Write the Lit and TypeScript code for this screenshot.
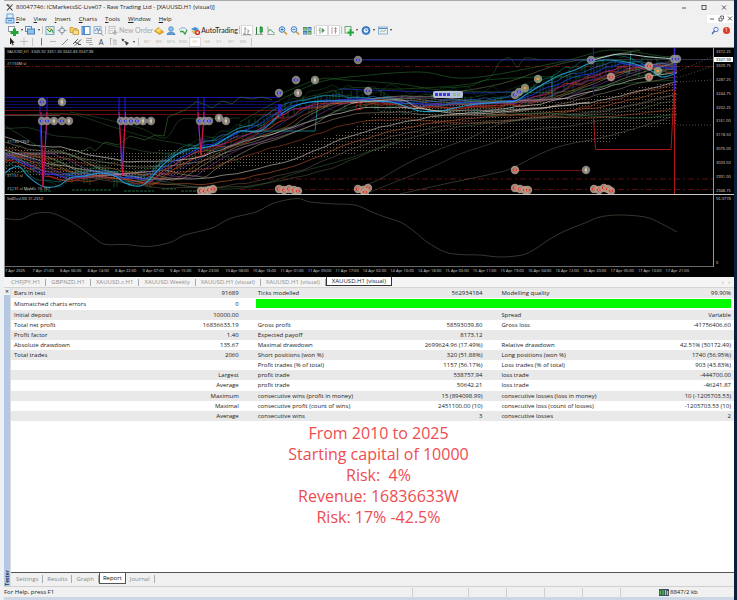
import { LitElement, html, svg, css } from "lit";
import { customElement, property } from "lit/decorators.js";
import { unsafeSVG } from "lit/directives/unsafe-svg.js";

type Pt = [number, number];

/* ---------- geometry helpers ---------- */
const at = (pts: Pt[], x: number): number => {
  if (x <= pts[0][0]) return pts[0][1];
  for (let i = 1; i < pts.length; i++) {
    if (x <= pts[i][0]) {
      const [x0, y0] = pts[i - 1];
      const [x1, y1] = pts[i];
      const t = (x - x0) / (x1 - x0);
      return y0 + (y1 - y0) * t;
    }
  }
  return pts[pts.length - 1][1];
};
const curve = (p: Pt[]): string => {
  let d = `M${p[0][0]} ${p[0][1]}`;
  for (let i = 0; i < p.length - 1; i++) {
    const a = p[Math.max(i - 1, 0)], b = p[i], c = p[i + 1], e = p[Math.min(i + 2, p.length - 1)];
    const n = (v: number) => v.toFixed(1);
    d += `C${n(b[0] + (c[0] - a[0]) / 6)} ${n(b[1] + (c[1] - a[1]) / 6)} ${n(c[0] - (e[0] - b[0]) / 6)} ${n(c[1] - (e[1] - b[1]) / 6)} ${c[0]} ${n(c[1])}`;
  }
  return d;
};
const line = (p: Pt[]): string => "M" + p.map((q) => q.join(" ")).join("L");
const rnd = (n: number): number => {
  const s = Math.sin(n * 127.1 + 11.7) * 43758.5453;
  return s - Math.floor(s);
};

/* ---------- price pane data ---------- */
const FAST: Pt[] = [[5, 173], [12, 168], [20, 167], [28, 176], [42, 186], [58, 186], [70, 178], [85, 176], [100, 173], [115, 176], [125, 183], [140, 186], [150, 179], [165, 163], [185, 150], [200, 148], [215, 145], [225, 139], [240, 131], [260, 131], [280, 115], [295, 106], [310, 102], [330, 101], [350, 101], [370, 101], [390, 102], [405, 106], [420, 111], [440, 111], [470, 105], [500, 102], [515, 101], [530, 92], [545, 83], [560, 75], [575, 70], [590, 63], [605, 60], [620, 61], [635, 64], [650, 70], [662, 77], [677, 73]];
const MID: Pt[] = [[5, 156], [20, 162], [40, 172], [60, 177], [85, 175], [105, 173], [125, 178], [145, 180], [160, 169], [180, 157], [200, 147], [215, 143], [230, 137], [255, 127], [270, 117], [290, 107], [310, 102], [340, 99], [380, 100], [410, 104], [440, 104], [490, 102], [515, 101], [540, 91], [565, 81], [590, 73], [620, 64], [650, 66], [677, 69]];
const SLOW: Pt[] = [[5, 137], [30, 145], [60, 147], [90, 155], [130, 162], [170, 161], [200, 157], [240, 143], [280, 132], [320, 118], [360, 108], [400, 107], [440, 111], [490, 110], [540, 104], [590, 92], [640, 78], [677, 72]];
const SLOWER: Pt[] = [[5, 150], [50, 164], [100, 172], [150, 179], [200, 179], [240, 173], [290, 161], [340, 140], [380, 127], [430, 117], [480, 112], [540, 108], [590, 103], [640, 91], [677, 82]];

const family = (base: Pt[], lag: number, off: number, amp: number, seed: number): string => {
  const p: Pt[] = [];
  for (let x = 5; x <= 677; x += 8) p.push([x, Math.min(191, at(base, x - lag) + off + (rnd(x + seed) - 0.5) * amp)]);
  return curve(p);
};

const strokes: [string, string, number, number][] = [
  [family(MID, 0, -6, 8, 3), "#1d5c2a", 0.6, 0.8],
  [family(MID, 6, -11, 10, 9), "#1f6a38", 0.5, 0.7],
  [family(MID, 0, 7, 9, 31), "#1c6b54", 0.5, 0.8],
  [family(MID, 14, 2, 5, 14), "#8a2a12", 0.8, 0.9],
  [family(MID, 10, 4, 4, 24), "#b13a1c", 0.8, 0.9],
  [family(MID, 3, 3, 3, 5), "#c62222", 0.9, 0.9],
  [family(MID, 6, 1, 3, 8), "#7a2bb0", 0.8, 0.9],
  [family(MID, 20, 1, 1, 2), "#3a2fa8", 0.7, 0.9],
  [family(MID, 30, 0, 1, 7), "#ad5a2c", 0.7, 0.9],
  [family(MID, 38, -1, 1, 17), "#a99c8c", 0.6, 0.9],
  [family(MID, 48, -2, 0, 1), "#8f3fae", 0.6, 0.9],
  [family(MID, 60, -3, 0, 1), "#b0a498", 0.6, 0.9],
  [family(SLOW, 0, 0, 1, 4), "#dcd8d0", 0.7, 0.9],
  [family(SLOW, 0, 5, 1, 6), "#9a8a78", 0.6, 0.9],
  [family(SLOW, 8, 12, 2, 6), "#c8552c", 0.6, 0.8],
  [family(SLOW, 25, -9, 1, 2), "#3e6d43", 0.5, 0.9],
  [family(SLOWER, 0, 0, 1, 6), "#c9c4ba", 0.7, 0.9],
  [family(SLOWER, 6, 5, 1, 2), "#b5562f", 0.7, 0.9],
  [family(SLOWER, 12, 9, 1, 8), "#7b6d5c", 0.5, 0.9],
  [family(SLOWER, 40, 8, 1, 8), "#5f6e50", 0.5, 0.9],
  [family(MID, 0, 0, 2, 12), "#1b35e0", 1, 0.9],
  [family(MID, -3, -3, 3, 18), "#2b6fd6", 0.7, 0.9],
  [family(FAST, 0, -4, 4, 22), "#178f8a", 0.6, 0.9],
  [curve(FAST), "#22a9d8", 1.1, 0.9],
  [curve([[5, 126], [22, 136], [40, 147], [60, 151], [80, 158], [110, 168], [150, 178], [200, 188], [250, 187], [300, 172], [350, 158], [400, 140]]), "#3c6a3a", 0.5, 1],
  [curve([[28, 115], [70, 114], [110, 126], [150, 138], [200, 148], [240, 162]]), "#2f5c2f", 0.5, 1],
  [curve([[70, 112], [100, 118], [140, 128], [165, 138], [180, 120], [200, 119], [240, 118]]), "#2f5c2f", 0.5, 1],
  [line([[5, 175], [30, 170], [70, 158], [90, 147], [95, 151], [105, 142], [118, 145], [130, 136], [145, 140], [155, 135], [164, 136], [168, 117], [185, 110], [196, 102], [204, 104], [212, 108], [222, 101], [232, 104], [240, 97], [252, 99], [262, 97], [272, 100]]), "#3f7f35", 0.6, 0.9],
  [curve([[240, 122], [280, 100], [320, 82], [360, 76], [420, 72], [470, 78], [560, 62], [610, 50], [660, 56], [677, 58]]), "#2a6a2f", 0.6, 1],
  [curve([[280, 94], [320, 79], [345, 80], [400, 84], [440, 90], [500, 92], [560, 92], [620, 84], [677, 80]]), "#2d7a34", 0.5, 1],
  [curve([[300, 99], [350, 88], [400, 89], [480, 82], [500, 62], [510, 58], [517, 67], [525, 58], [540, 60]]), "#2c6d2c", 0.5, 1],
  [curve([[430, 96], [500, 84], [560, 64], [600, 57], [640, 50]]), "#6d8c55", 0.5, 1],
  [curve([[440, 88], [470, 86], [487, 80], [540, 77], [590, 77]]), "#1a7a2a", 0.5, 1],
  [curve([[360, 187], [378, 180], [410, 162], [440, 149], [470, 138], [500, 124], [540, 117], [590, 112], [640, 104], [677, 94]]), "#6c6f62", 0.5, 0.9],
  [curve([[370, 192], [430, 168], [460, 154], [490, 144], [530, 130], [570, 126], [620, 117]]), "#62665a", 0.5, 0.9],
  [curve([[400, 194], [440, 185], [487, 175], [510, 169], [540, 154], [565, 145], [600, 138], [640, 127], [677, 115]]), "#6c6f62", 0.5, 0.9],
  [curve([[487, 116], [540, 113], [590, 116], [640, 118], [677, 114]]), "#2e7d4f", 0.6, 1],
  [curve([[487, 114], [540, 116], [590, 118], [660, 111], [677, 107]]), "#9b4a25", 0.6, 1],
  [line([[240, 131], [315, 131], [318, 100]]), "#24a5a5", 0.7, 1],
  [line([[552, 76], [552, 98]]), "#24a5a5", 0.7, 1],
  [line([[631, 52], [629, 74]]), "#24a5a5", 0.7, 1],
  [curve([[593, 60], [620, 54], [650, 57], [677, 59]]), "#cfd8d8", 0.9, 1],
  [curve([[340, 89], [400, 91], [470, 93], [530, 91]]), "#2233d0", 0.7, 1],
  [curve([[350, 103], [400, 100], [420, 108], [470, 114], [540, 108], [590, 102]]), "#d8cdbf", 0.7, 1],
];

const CLOUD_TOP: Pt[] = [[5, 148], [60, 150], [100, 152], [150, 152], [200, 148], [240, 158], [300, 146], [350, 132], [380, 112], [420, 106], [480, 103], [560, 101], [610, 96], [640, 88], [677, 82]];
const CLOUD_BOTTOM: Pt[] = [[5, 172], [60, 178], [100, 180], [150, 178], [200, 172], [240, 168], [300, 160], [350, 154], [380, 151], [420, 146], [480, 142], [560, 142], [610, 142], [630, 130], [677, 124]];
const cloud = (): string => {
  let d = "";
  for (let x = 6; x < 677; x += 3) d += `M${x + 0.5} ${Math.round(at(CLOUD_TOP, x) / 3) * 3}V${Math.round(at(CLOUD_BOTTOM, x))}`;
  return d;
};
const candles = (): string => {
  let d = "";
  for (let x = 66; x < 676; x += 3) {
    const y = at(MID, x) - 4 + (rnd(x) - 0.5) * 12;
    d += `M${x} ${y.toFixed(1)}v${(4 + rnd(x + 5) * 9).toFixed(1)}`;
  }
  return d;
};

const markers: [number, number, string][] = [
  [42, 102, "b"], [62, 102, "g"], [42, 121, "b"], [47, 121, "b"], [54, 121, "g"], [62, 121, "b"], [69, 121, "g"],
  [121, 121, "b"], [126, 121, "b"], [131, 121, "b"], [137, 121, "b"], [143, 121, "g"], [151, 121, "g"],
  [200, 121, "b"], [205, 121, "b"], [209, 121, "b"], [219, 118, "g"], [226, 121, "g"],
  [279, 93, "b"], [296, 80, "b"], [315, 80, "g"], [298, 93, "g"], [358, 60, "b"], [368, 91, "b"],
  [515, 95, "b"], [519, 92, "b"], [525, 88, "n"], [538, 79, "n"], [591, 60, "b"], [611, 77, "r"],
  [649, 66, "r"], [649, 77, "r"], [658, 71, "n"], [674, 59, "b"], [677, 59, "b"], [515, 170, "r"], [586, 170, "g"],
  [201, 191, "r"], [205, 191, "r"], [209, 190, "r"], [213, 189, "r"],
  [279, 189, "r"], [284, 190, "r"], [289, 189, "r"], [294, 190, "r"], [298, 191, "r"],
  [358, 189, "r"], [363, 190, "r"], [368, 188, "r"], [365, 192, "r"],
  [515, 188, "r"], [520, 189, "r"], [525, 190, "r"], [528, 190, "r"],
  [594, 189, "r"], [599, 190, "r"], [604, 188, "r"], [608, 189, "r"], [611, 191, "r"],
];

const marker = ([x, y, k]: [number, number, string]) => {
  const c = k === "b" ? "#2a2ae0" : k === "r" ? "#e02a1c" : k === "n" ? "#e07a30" : "#eadfae";
  return svg`<circle cx=${x} cy=${y} r="4.2" fill=${k === "r" ? "#b89c8c" : k === "n" ? "#8fa080" : "#938f8d"} fill-opacity=".88"></circle>
  ${k === "g"
    ? svg`<path d="M${x} ${y - 2.5}v5M${x - 1.5} ${y}h2.5" stroke=${c} stroke-width="1"></path>`
    : svg`<path d="M${x - 2.5} ${y}l2-2v1.3h2.5v1.4h-2.5v1.3z" fill=${c}></path><path d="M${x - 1} ${y}h1.6" stroke="#fff" stroke-width=".7"></path>`}`;
};

const DEV: Pt[] = [[5, 218.5], [20, 219.5], [33, 214], [45, 212.5], [55, 214], [70, 221], [85, 231], [97, 240], [106, 244.5], [125, 244.5], [148, 246.5], [170, 242.5], [185, 235], [212, 228], [230, 218.5], [256, 212], [274, 203], [297, 198.5], [310, 202], [335, 204], [355, 205], [372, 212], [385, 217], [402, 223], [415, 232], [427, 242], [445, 252], [460, 254.5], [480, 255], [500, 257], [522, 255], [535, 249], [550, 239], [565, 231], [585, 223], [600, 217], [620, 215], [645, 217], [660, 223], [677, 232]];

/* ---------- toolbar glyphs on a 12 x 11 grid ---------- */
const G: Record<string, string> = {
  plus: `<rect x="1.500" y="1.500" width="6" height="5" fill="#fff" stroke="#8a9aa8"/><path d="M6 3.500h3v2.500h2.500v3H9V11H6V9H3.500V6H6z" fill="#1fa637"/>`,
  layers: `<rect x="1.500" y="1.500" width="6" height="5" fill="#e9f2fb" stroke="#5b8fc4"/><rect x="3.500" y="4" width="7" height="5" fill="#8fc0ea" stroke="#4a80b8"/>`,
  watch: `<rect x="2" y="1.500" width="8" height="8" fill="#dbeedb" stroke="#7aa9c8"/><path d="M3 4l3 3 1.500-3 2 4" stroke="#1f8a3a" fill="none"/><path d="M4 2.500l3 2" stroke="#d99a20"/>`,
  cross: `<circle cx="6" cy="5.500" r="2.500" fill="none" stroke="#8b98a5"/><path d="M6 1v3M6 7v3M1.500 5.500h3M7.500 5.500h3" stroke="#8b98a5"/>`,
  folder: `<path d="M2 2.500h3l1 1h3v4H2z" fill="#f6cf60" stroke="#b88a28" stroke-width=".7"/><path d="M5 5h5.500v4.500H5z" fill="#f9df8c" stroke="#b88a28" stroke-width=".7"/>`,
  term: `<rect x="2" y="1.500" width="8" height="8" fill="#fff" stroke="#4f86c6"/><rect x="2.500" y="2" width="2.500" height="7" fill="#4f8fd8"/>`,
  tester: `<rect x="2" y="1.500" width="7" height="7" fill="#e3edf8" stroke="#8aa9c8" stroke-width=".8"/><path d="M3 6l2-3 1 3 2-3" stroke="#5b87b8" fill="none" stroke-width=".8"/><circle cx="8" cy="7" r="1.800" fill="#fff" stroke="#7a8794" stroke-width=".8"/><path d="M9 8.500l2 2" stroke="#7a8794"/>`,
  order: `<rect x="2" y="1.500" width="6" height="7" fill="#f4f4f4" stroke="#b5b5b5" stroke-width=".8"/><path d="M3 3.500h4M3 5.500h3" stroke="#b9b9b9" stroke-width=".7"/><path d="M8 5v5M5.500 7.500h5" stroke="#aeb4ae" stroke-width="1.500"/>`,
  gold: `<path d="M1.500 6l4-3.500L10.500 7l-4 2.500z" fill="#f0b428" stroke="#b87a10" stroke-width=".7"/><path d="M3 5.500l3-2.500 2.500 2-3 2.500z" fill="#fbdc70"/>`,
  user: `<circle cx="6" cy="4" r="2.300" fill="#8fc6f0" stroke="#3e86c4" stroke-width=".8"/><path d="M2 9.500c0-3 8-3 8 0z" fill="#5aa7e4" stroke="#2f74b4" stroke-width=".7"/>`,
  signal: `<path d="M2 5c2-3 6-3 8 0" stroke="#7fb0d8" fill="none"/><path d="M3 6.500h3l2 2.500 2-4" stroke="#35a04a" fill="none" stroke-width="1.300"/>`,
  auto: `<path d="M2 4l4-2 4 2-4 2z" fill="#3f8fd8"/><path d="M3 5.500c0 3 5 4 5 1" fill="#f2c348" stroke="#b98a20" stroke-width=".6"/><circle cx="8.500" cy="7.500" r="2.600" fill="#d8281c"/><rect x="7.500" y="6.500" width="2" height="2" fill="#fff"/>`,
  bars: `<path d="M4 2v7M2.500 8.500H4M4 4h1.500M7 4.500v4.500M7 6h1.500M2 9.500h8" stroke="#7b8a7b" fill="none" stroke-width=".8"/>`,
  candle: `<path d="M3.500 2v7.500M8 1v8" stroke="#2c7a3c"/><rect x="7" y="2.500" width="2.500" height="4.500" fill="#2fae4a" stroke="#1d7a30" stroke-width=".6"/><path d="M2 9.500h8" stroke="#7a8a7a" stroke-width=".7"/>`,
  linec: `<path d="M3 1.500v8h7" stroke="#8a9a8a" fill="none" stroke-width=".8"/><path d="M3.500 6.500c2-5 3 1 6 1.500" stroke="#2f9a48" fill="none"/>`,
  zin: `<circle cx="5" cy="4.500" r="2.800" fill="#d8ecfb" stroke="#3f83c8"/><path d="M3.500 4.500h3M5 3v3" stroke="#2a6ab0" stroke-width=".8"/><path d="M7 6.500l3 3" stroke="#c99a30" stroke-width="1.600"/>`,
  zout: `<circle cx="5" cy="4.500" r="2.800" fill="#d8ecfb" stroke="#3f83c8"/><path d="M3.500 4.500h3" stroke="#2a6ab0" stroke-width=".8"/><path d="M7 6.500l3 3" stroke="#c99a30" stroke-width="1.600"/>`,
  tile: `<rect x="2" y="2" width="4" height="3.500" fill="#3c9a48"/><rect x="6.500" y="2" width="4" height="3.500" fill="#3f74c4"/><rect x="2" y="6" width="4" height="3.500" fill="#3f74c4"/><rect x="6.500" y="6" width="4" height="3.500" fill="#3c9a48"/><path d="M2.500 4h3M7 4h3M2.500 8h3M7 8h3" stroke="#eaf3ea" stroke-width=".8"/>`,
  shift: `<path d="M4 2v7M4 5h-1.500M6 3.500v4l2.500-2z" stroke="#5a8a68" fill="#5aa868" stroke-width=".8"/>`,
  scroll: `<path d="M4 2v7M6 3.500h3M6 6h3M7.500 2v7" stroke="#a08a88" fill="none" stroke-width=".8"/>`,
  ind: `<rect x="2" y="1.500" width="6" height="6.500" fill="#e8f4e8" stroke="#5a9a68" stroke-width=".8"/><path d="M6.500 4h2v2.500H11v2H8.500V11h-2V8.500H4.500v-2h2z" fill="#22a83c"/>`,
  clock: `<circle cx="6" cy="5.500" r="4" fill="#3f86d4" stroke="#2a5fa0" stroke-width=".7"/><circle cx="6" cy="5.500" r="2.300" fill="#e8f3fd"/><path d="M6 4v1.500h1.200" stroke="#35506e" fill="none" stroke-width=".7"/>`,
  templ: `<rect x="1.500" y="2" width="9" height="7" fill="#eaf2fa" stroke="#7a9cbf" stroke-width=".8"/><path d="M2 3.500h8" stroke="#4f86c6"/><path d="M3 7l2-1.500 1.500 1L9 5" stroke="#7a9a7a" fill="none" stroke-width=".7"/>`,
  cursor: `<path d="M4 1.500v7l1.700-1.500 1 2.500 1-.5-1-2.300h2z" fill="#222"/>`,
  xhair: `<path d="M6 1.500v8M2 5.500h8" stroke="#b5b5b5" stroke-width=".8"/>`,
  vline: `<path d="M6.500 2v7.500" stroke="#777"/>`,
  hline: `<path d="M3 5.500h6" stroke="#bbb"/>`,
  trend: `<path d="M3 9l6-6" stroke="#888"/>`,
  chan: `<path d="M2 8l5-5M4 9.500l6-6M4 6l4 2" stroke="#444" stroke-width=".9"/><path d="M7 8.500h3" stroke="#444"/>`,
  fibo: `<path d="M3 2.500h6M3 4.500h6M3 6.500h6M6 8.500h4" stroke="#999" stroke-width=".8"/>`,
  label: `<path d="M3.500 2.500v6.500M2.500 2.500h3M7 4v5M6 4h3M9 4v5" stroke="#aaa" fill="none" stroke-width=".8"/>`,
  arrows: `<path d="M2.500 2.500l3 1-2 2zM6 5l4 2-3 2.500z" fill="#333"/><path d="M3.500 4l5 4" stroke="#555" stroke-width=".8"/>`,
  search: `<circle cx="7" cy="4.500" r="2.200" fill="none" stroke="#5a7fd0"/><path d="M5.500 6L3 9" stroke="#3e62b8" stroke-width="1.300"/>`,
  app: `<path d="M3 2.500l5.500 6M8.500 2.500L3 8.500" stroke="#333" stroke-width="1.100"/><path d="M2.500 3h3" stroke="#333" stroke-width=".8"/>`,
  doc: `<rect x="3" y="1" width="6" height="4" fill="#e6f1fb" stroke="#4d8fd0" stroke-width=".8"/><rect x="2" y="5.500" width="8" height="4.500" fill="#bcdcf6" stroke="#3c80c4" stroke-width=".8"/><path d="M4 7.500h4" stroke="#3c80c4" stroke-width=".8"/>`,
  min: `<path d="M4 6h4" stroke="#333" stroke-width=".8"/>`,
  max: `<rect x="4" y="3.500" width="4" height="4" fill="none" stroke="#333" stroke-width=".8"/>`,
  restore: `<path d="M4 5h3v3H4zM5.500 4V3h3v3H7.500" fill="none" stroke="#444" stroke-width=".8"/>`,
  close: `<path d="M4 3.500l4 4M8 3.500l-4 4" stroke="#333" stroke-width=".8"/>`,
  net: `<rect x="1" y="2" width="10" height="7" fill="#39506a"/><path d="M2.500 3.500v4M5 3v5" stroke="#58b848" stroke-width="1.400"/><path d="M7.500 3v5M9.500 4v4" stroke="#d8c840" stroke-width="1.200"/>`,
};

@customElement("glyph-icon")
export class GlyphIcon extends LitElement {
  @property() name = "";
  static styles = css`
    :host { display: block; width: 12px; height: 11px; flex: none; }
    .g { display: block; width: 100%; height: 100%; }
  `;
  render() {
    return html`<svg class="g" viewBox="0 0 12 11" aria-hidden="true">${unsafeSVG(G[this.name] ?? "")}</svg>`;
  }
}

@customElement("price-chart")
export class PriceChart extends LitElement {
  static styles = css`
    :host {
      display: grid; grid-template-columns: minmax(0, 1fr) 20px; background: #000; color: #d4d4d4;
      border-top: 1px solid #8d8d8d; border-left: 1px solid #8d8d8d;
      font: 4px/6px "Open Sans", "Noto Sans", sans-serif;
    }
    .pane { position: relative; border-bottom: 1px solid #c8c8c8; border-right: 1px solid #9a9a9a; }
    .sub { border-bottom-color: #6a6a6a; }
    svg { display: block; width: 100%; }
    .price { height: 146px; }
    .dev { height: 71px; }
    .tag { position: absolute; left: 2px; white-space: pre; }
    .t0 { top: 1px; } .t1 { top: 13px; } .t2 { top: 91px; } .t3 { top: 125px; } .t4 { top: 138px; }
    .scale { position: relative; display: flex; flex-direction: column; justify-content: space-between; padding: 1px 0 0 2px; border-bottom: 1px solid #c8c8c8; }
    .plain { border-bottom-color: #000; }
    .now { position: absolute; left: 0; right: 1px; top: 9px; height: 5px; line-height: 5px; padding-left: 2px; background: #fff; color: #111; }
    .time { display: grid; grid-template-columns: repeat(25, minmax(0, 1fr)); padding: 1px 21px 3px 0; white-space: nowrap; }
  `;
  render() {
    const prices = ["3372.25", "3329.75", "3287.25", "3244.75", "3202.25", "3161.00", "3118.50", "3076.00", "3033.50", "2991.00", "2948.75"];
    const times = ["7 Apr 2025", "7 Apr 21:00", "8 Apr 06:00", "8 Apr 14:00", "8 Apr 22:00", "9 Apr 07:00", "9 Apr 15:00", "9 Apr 23:00", "10 Apr 08:00", "10 Apr 16:00", "11 Apr 01:00", "11 Apr 09:00", "11 Apr 17:00", "14 Apr 02:00", "14 Apr 10:00", "14 Apr 18:00", "15 Apr 03:00", "15 Apr 11:00", "15 Apr 19:00", "16 Apr 04:00", "16 Apr 12:00", "16 Apr 20:00", "17 Apr 05:00", "17 Apr 13:00", "17 Apr 21:00"];
    return html`
      <div class="pane">
        <svg class="price" viewBox="5 48 708 146" preserveAspectRatio="none" fill="none" role="img" aria-label="XAUUSD H1 price chart">
          <path d="M5 59.500H713" stroke="#3c3c50" stroke-width=".8"></path>
          <path d="M358 60H590" stroke="#1c1c88"></path>
          <path d="M5 66.500H713" stroke="#681010" stroke-dasharray="5 2 1 2"></path>
          <path d="M240 179H713M240 189.500H713" stroke="#5c0e0e" stroke-dasharray="6 3 2 3"></path>
          <path d="M5 97.500H280" stroke="#1616b0"></path>
          <path d="M5 101.500H280M5 104.500H280M5 107.500H280" stroke="#0c0c6a"></path>
          <path d="M5 110.500H280M5 114.500H280" stroke="#8a1010" stroke-width=".8"></path>
          <path d="M5 115.500H60" stroke="#777" stroke-width=".6"></path>
          <path d="M515 170.500H586" stroke="#701010"></path>
          <path d=${cloud()} stroke="#b79f88" stroke-width=".9" stroke-dasharray="1 2" stroke-opacity=".7"></path>
          <path d=${candles()} stroke="#1f7a44" stroke-width=".7" stroke-opacity=".8"></path>
          <path d="M10 190h3m12 0h5m10 1h12m20-1h40m12 1h30m8-2h14m5 2h20" stroke="#23623a" stroke-dasharray="3 1"></path>
          ${strokes.map(([d, c, w, o]) => svg`<path d=${d} stroke=${c} stroke-width=${w} stroke-opacity=${o}></path>`)}
          <path d="M677 72L713 56M677 78L713 66M677 82L713 80M677 125H713" stroke="#77706a" stroke-width=".7" stroke-dasharray="1 2"></path>
          <path d="M40 97v22l2.500 60M47 97v22l-3.500 60M119 97v22l3 50M125 97v22l-3 50M198 97v22l2.500 30M204 97v22l-2.500 30" stroke="#2020d8" stroke-width="1"></path>
          <path d="M41 112l2 75 4-75M119 112l3.500 64 3-64M198 112l3 43 3-43" stroke="#e0183c" stroke-width="1"></path>
          <path d="M278 104v8l2 6 2-8v-6" fill="#1c1cc0"></path>
          <path d="M276 118l4-8 4 8zM355 110l3.500-9 4 8z" stroke="#c01c1c" stroke-width=".8"></path>
          <path d="M593.500 48V95" stroke="#1a1aa8" stroke-width="1.200"></path>
          <path d="M593.500 118L595.500 149.500H671L674 92" stroke="#a81818"></path>
          <path d="M674.500 48V140" stroke="#3a28c8" stroke-width="1.500"></path>
          <path d="M674.500 90V194" stroke="#b01818"></path>
          <rect x="433" y="91" width="30" height="7" rx="2" fill="#b8bfd8"></rect>
          <path d="M435 94.500h15" stroke="#3a3ae0" stroke-width="3" stroke-dasharray="3 1"></path>
          <path d="M453 94.500h8" stroke="#8fbf98" stroke-width="3" stroke-dasharray="3 1"></path>
          ${markers.map(marker)}
        </svg>
        <span class="tag t0">XAUUSD,H1  3345.92 3351.30 3342.83 3347.98</span>
        <span class="tag t1">#1150M sl</span>
        <span class="tag t2">#1130 1350</span>
        <span class="tag t3">#1151 sl</span>
        <span class="tag t4">#1131 sl Middle 10 767</span>
      </div>
      <div class="scale">${prices.map((p) => html`<span>${p}</span>`)}<span class="now">3347.98</span></div>
      <div class="pane sub">
        <svg class="dev" viewBox="5 195 708 71" preserveAspectRatio="none" fill="none" role="img" aria-label="Standard deviation">
          <path d=${curve(DEV)} stroke="#4a4d42" stroke-width=".7"></path>
        </svg>
        <span class="tag t0">StdDev(30) 31.2352</span>
      </div>
      <div class="scale plain"><span>56.0778</span><span>0</span></div>
      <div class="time">${times.map((t) => html`<span>${t}</span>`)}</div>
      <div></div>
    `;
  }
}

@customElement("tester-report")
export class TesterReport extends LitElement {
  static styles = css`
    :host { display: block; }
    table { width: 100%; height: 133px; table-layout: fixed; border-collapse: collapse; font: 6px/8px "Open Sans", "Noto Sans", sans-serif; color: #222; }
    tr:nth-child(odd) { background: #e9e9e9; }
    th, td { padding: 0; font-weight: 400; text-align: left; white-space: nowrap; }
    th { padding-left: 3px; }
    .val { text-align: right; }
    .edge { padding-right: 3px; }
    .gap { width: 16px; }
    .c1 { width: 18%; } .c2 { width: 13.5%; }
    .meter { padding: 0 3px 0 1px; }
    .fill { height: 9px; background: #00fa00; }
  `;
  render() {
    const rows = [
      ["Bars in test", "91689", "Ticks modelled", "562934184", "Modelling quality", "99.90%"],
      ["Mismatched charts errors", "0"],
      ["Initial deposit", "10000.00", "", "", "Spread", "Variable"],
      ["Total net profit", "16836633.19", "Gross profit", "58593039.80", "Gross loss", "-41756406.60"],
      ["Profit factor", "1.40", "Expected payoff", "8173.12", "", ""],
      ["Absolute drawdown", "135.67", "Maximal drawdown", "2699624.96 (17.49%)", "Relative drawdown", "42.51% (50172.49)"],
      ["Total trades", "2060", "Short positions (won %)", "320 (51.88%)", "Long positions (won %)", "1740 (56.95%)"],
      ["", "", "Profit trades (% of total)", "1157 (56.17%)", "Loss trades (% of total)", "903 (43.83%)"],
      ["", "Largest", "profit trade", "538757.94", "loss trade", "-444700.00"],
      ["", "Average", "profit trade", "50642.21", "loss trade", "-46241.87"],
      ["", "Maximum", "consecutive wins (profit in money)", "15 (894098.99)", "consecutive losses (loss in money)", "10 (-1205703.53)"],
      ["", "Maximal", "consecutive profit (count of wins)", "2451100.00 (10)", "consecutive loss (count of losses)", "-1205703.53 (10)"],
      ["", "Average", "consecutive wins", "3", "consecutive losses", "2"],
    ];
    return html`<table>
      <colgroup><col class="c1" /><col class="c2" /><col class="gap" /><col class="c1" /><col class="c2" /><col class="gap" /><col class="c1" /><col /></colgroup>
      <tbody>
        ${rows.map((r) => html`<tr>
          <th scope="row">${r[0]}</th><td class="val">${r[1]}</td><td></td>
          ${r.length === 2
            ? html`<td colspan="5" class="meter"><div class="fill"></div></td>`
            : html`<th scope="row">${r[2]}</th><td class="val">${r[3]}</td><td></td><th scope="row">${r[4]}</th><td class="val edge">${r[5]}</td>`}
        </tr>`)}
      </tbody>
    </table>`;
  }
}

@customElement("app-root")
export class AppRoot extends LitElement {
  static styles = css`
    :host {
      display: flex; min-height: 100vh; box-sizing: border-box; padding: 0 3px 3px 4px;
      background: linear-gradient(90deg, #eef1f4 0 50%, #0d1e3a 50%);
      font: 6px/8px "Open Sans", "Noto Sans", sans-serif; color: #222;
    }
    .window { flex: 1; min-width: 0; display: flex; flex-direction: column; background: #f0f0f0; border-top: 1px solid #a9a9a9; box-shadow: 0 3px 0 #ccd6e4; }
    button { font: inherit; color: inherit; border: 0; background: none; padding: 0; margin: 0; display: flex; align-items: center; }
    .row { display: flex; align-items: center; }
    .title { height: 12px; }
    .title h1 { font: inherit; margin: 0; flex: 1; }
    .ctl { width: 20px; justify-content: center; }
    .menu { height: 11px; line-height: 10px; }
    .menu .items { display: flex; gap: 8px; flex: 1; }
    .menu u { text-underline-offset: 1px; text-decoration-thickness: 1px; }
    .mdi { display: flex; background: #fff; height: 8px; align-items: center; }
    .mdi button { width: 9px; justify-content: center; overflow: hidden; height: 8px; }
    .bar { height: 12px; padding-left: 3px; }
    .bar2 { height: 11px; padding-left: 2px; }
    .on { background: #fff; box-shadow: inset 0 0 0 1px #d8d8d8; }
    .caret { width: 5px; height: 8px; justify-content: center; }
    .caret::after { content: ""; border: 1px solid transparent; border-top: 2px solid #333; border-bottom: 0; }
    .sep { width: 1px; height: 8px; margin: 0 1px; background: #c4c4c4; }
    .bar2 .sep { margin: 0 2px; }
    .words { font-family: Lato, "Open Sans", sans-serif; font-size: 7px; }
    .off { color: #a8a8a8; }
    .spacer { flex: 1; }
    .badge { width: 7px; height: 7px; border-radius: 50%; background: #d83a2c; color: #fff; font-size: 5px; line-height: 7px; justify-content: center; margin: 0 4px 0 2px; }
    .tf { width: 12px; height: 10px; justify-content: center; font-size: 4px; color: #b4b4b4; }
    .letter { width: 12px; justify-content: center; color: #444; }
    .charts { height: 11px; padding-left: 2px; font-size: 6px; color: #8f8f8f; border-bottom: 1px solid #d4d4d4; box-sizing: border-box; background: #f4f4f4; }
    .charts button { padding: 0 5px; height: 7px; border-right: 1px solid #aaa; }
    .charts .cur { background: #fff; color: #222; height: 9px; border: 1px solid #333; border-top: 0; align-self: flex-start; padding: 0 5px; }
    .arrows { padding-right: 4px; }
    .tester { flex: 1; display: grid; grid-template-columns: 6px minmax(0, 1fr); background: #fff; }
    .rail { display: flex; flex-direction: column; justify-content: space-between; align-items: center; background: #b4c8e4; }
    .rail .x { background: #f0f0f0; width: 6px; height: 7px; justify-content: center; font-size: 7px; line-height: 7px; }
    .rail .name { writing-mode: vertical-rl; transform: rotate(180deg); font-size: 5px; line-height: 6px; font-weight: 700; color: #1c3a66; }
    .body { display: flex; flex-direction: column; border-left: 1px solid #dcdcdc; }
    .note { text-align: center; color: #ee4c50; font-size: 16px; line-height: 21px; margin: 0; padding: 2px 0 0 12px; flex: 1; white-space: pre-line; }
    .tabs { height: 13px; border-top: 1px solid #555; background: #f0f0f0; color: #8a8a8a; align-items: flex-start; padding-left: 1px; }
    .tabs button { height: 8px; margin-top: 2px; padding: 0 4px; border-right: 1px solid #aaa; }
    .tabs .cur { margin-top: 0; height: 11px; background: #fff; color: #111; border: 1px solid #555; border-top: 0; padding: 0 3px; }
    .status { height: 11px; border-top: 1px solid #d0d0d0; box-sizing: border-box; }
    .cell { border-left: 1px solid #cfcfcf; height: 9px; width: 38px; flex: none; box-sizing: border-box; }
    .wide { width: 56px; }
    .conn { width: 76px; flex: none; display: flex; align-items: center; }
  `;
  private btn(name: string, label: string, cls = "") {
    return html`<button class=${cls} aria-label=${label}><glyph-icon name=${name}></glyph-icon></button>`;
  }
  private caret = () => html`<button class="caret" aria-label="More"></button>`;
  private sep = () => html`<span class="sep"></span>`;

  render() {
    const menus = ["File", "View", "Insert", "Charts", "Tools", "Window", "Help"];
    const charts = ["CHFJPY.H1", "GBPNZD.H1", "XAUUSD.c.H1", "XAUUSD.Weekly", "XAUUSD.H1 (visual)", "XAUUSD.H1 (visual)"];
    const frames = ["M1", "M5", "M15", "M30", "H1", "H4", "D1", "W1", "MN"];
    return html`<main class="window">
      <header class="row title">
        <glyph-icon name="app"></glyph-icon>
        <h1>80047746: ICMarketsSC-Live07 - Raw Trading Ltd - [XAUUSD,H1 (visual)]</h1>
        ${this.btn("min", "Minimize", "ctl")}${this.btn("max", "Maximize", "ctl")}${this.btn("close", "Close", "ctl")}
      </header>
      <nav class="row menu">
        <glyph-icon name="doc"></glyph-icon>
        <div class="items">${menus.map((m) => html`<button><span><u>${m[0]}</u>${m.slice(1)}</span></button>`)}</div>
        <div class="mdi">${this.btn("min", "Minimize chart")}${this.btn("restore", "Restore chart")}${this.btn("close", "Close chart")}</div>
      </nav>
      <div class="row bar">
        ${this.btn("plus", "New chart")}${this.caret()}${this.btn("layers", "Profiles")}${this.caret()}${this.sep()}
        ${this.btn("watch", "Market watch")}${this.btn("cross", "Data window")}${this.btn("folder", "Navigator")}${this.btn("term", "Terminal")}${this.btn("tester", "Strategy tester")}${this.sep()}
        <button class="words off"><glyph-icon name="order"></glyph-icon>New Order</button>
        ${this.btn("gold", "Editor")}${this.btn("user", "Account")}${this.btn("signal", "Signals")}
        <button class="words"><glyph-icon name="auto"></glyph-icon>AutoTrading</button>${this.sep()}
        ${this.btn("bars", "Bar chart", "on")}${this.btn("candle", "Candlesticks")}${this.btn("linec", "Line chart")}${this.btn("zin", "Zoom in")}${this.btn("zout", "Zoom out")}${this.btn("tile", "Tile windows")}${this.sep()}
        ${this.btn("shift", "Auto scroll", "on")}${this.btn("scroll", "Chart shift", "on")}${this.sep()}
        ${this.btn("ind", "Indicators")}${this.caret()}${this.btn("clock", "Periods")}${this.caret()}${this.btn("templ", "Templates")}${this.caret()}
        <span class="spacer"></span>
        ${this.btn("search", "Search")}<button class="badge" aria-label="1 notification">1</button>
      </div>
      <div class="row bar bar2">
        ${this.btn("cursor", "Cursor")}${this.btn("xhair", "Crosshair")}${this.sep()}
        ${this.btn("vline", "Vertical line")}${this.btn("hline", "Horizontal line")}${this.btn("trend", "Trendline")}${this.btn("chan", "Channel")}${this.btn("fibo", "Fibonacci")}
        <button class="words letter">A</button>
        ${this.btn("label", "Text label")}${this.btn("arrows", "Arrows")}${this.caret()}${this.sep()}
        ${frames.map((f) => html`<button class="tf ${f === "H1" ? "on" : ""}">${f}</button>`)}${this.sep()}
      </div>
      <price-chart></price-chart>
      <div class="row charts">
        ${charts.map((c) => html`<button>${c}</button>`)}<button class="cur">XAUUSD.H1 (visual)</button>
        <span class="spacer"></span><span class="arrows">‹ &nbsp; ›</span>
      </div>
      <section class="tester">
        <div class="rail"><button class="x" aria-label="Close tester">×</button><span class="name">Tester</span></div>
        <div class="body">
          <tester-report></tester-report>
          <p class="note">From 2010 to 2025
            Starting capital of 10000
            Risk:&nbsp; 4%
            Revenue: 16836633W
            Risk: 17% -42.5%</p>
          <div class="row tabs">
            <button>Settings</button><button>Results</button><button>Graph</button><button class="cur">Report</button><button>Journal</button>
          </div>
        </div>
      </section>
      <footer class="row status">
        <span>For Help, press F1</span><span class="spacer"></span>
        <span class="cell wide"></span><span class="cell"></span><span class="cell"></span><span class="cell"></span><span class="cell"></span><span class="cell"></span>
        <span class="conn"><glyph-icon name="net"></glyph-icon>8847/2 kb</span>
      </footer>
    </main>`;
  }
}
